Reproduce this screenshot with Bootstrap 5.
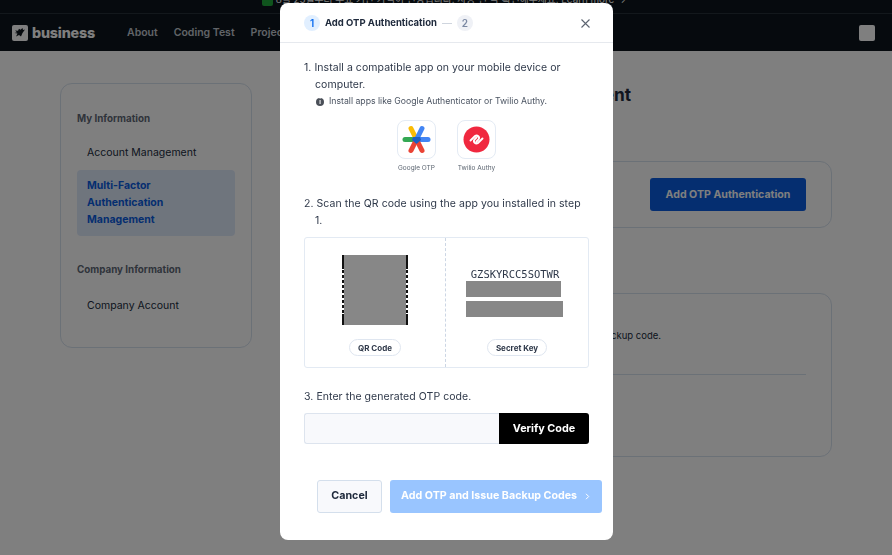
<!DOCTYPE html>
<html lang="en">
<head>
  <meta charset="UTF-8">
  <meta name="viewport" content="width=device-width, initial-scale=1.0">
  <title>Add OTP Authentication</title>
  <link href="https://cdn.jsdelivr.net/npm/bootstrap@5.3.3/dist/css/bootstrap.min.css" rel="stylesheet">
  <style>
    html, body { height: 100%; overflow: hidden; }
    body { font-family: Inter, "Noto Sans CJK KR", sans-serif; color: #202b3d; background: #fff; }

    .top-notice { height: 14px; background: #0c151c; color: #fff; border-bottom: 1px solid #263038; font-size: 9.800px; line-height: 13px; overflow: hidden; }
    .top-notice-inner { margin-top: -7px; margin-left: 262px; white-space: nowrap; }
    .notice-check { display: inline-block; width: 11px; height: 11px; background: #1fa83a; border-radius: 2px; vertical-align: middle; }
    .site-nav { height: 37px; background: #0c151c; padding: 0 17px 0 12px; }
    .site-logo { width: 16px; height: 16px; background: #fff; border-radius: 2px; }
    .site-name { font-size: 14.300px; font-weight: 800; color: #fff; margin-left: 4px; width: 95px; letter-spacing: -.2px; }
    .site-link { font-size: 10.500px; font-weight: 600; color: #c2c8d0; margin-right: 16px; }
    .user-box { width: 16px; height: 16px; background: #fff; border-radius: 2px; }

    .page-wrap { padding: 32px 60px 0; gap: 30px; }
    .side-box { width: 192px; height: 265px; border: 1px solid #d7e2ee; border-radius: 12px; padding: 27px 16px 0; flex: none; }
    .side-title { font-size: 9.800px; font-weight: 700; color: #5f6977; margin-bottom: 12px; line-height: 16px; }
    .side-title-low { margin-bottom: 14px; }
    .side-item { font-size: 10.500px; padding: 5px 10px; line-height: 17px; margin-bottom: 4px; }
    .side-item.is-active { background: #dfeafb; color: #0a5ce0; font-weight: 700; border-radius: 4px; padding: 7px 10px 8px; margin-bottom: 26px; }
    .main-area { flex: 1; }
    .main-title { font-size: 17.250px; font-weight: 700; height: 78px; line-height: 24px; white-space: nowrap; }
    .main-box { border: 1px solid #d7e2ee; border-radius: 12px; }
    .main-box-otp { height: 67px; margin-bottom: 65px; padding: 16px 25px 0 0; }
    .main-box-backup { height: 164px; padding: 35px 25px 0 0; font-size: 9.500px; line-height: 14px; }
    .backup-note { text-align: right; padding-right: 145px; }
    .btn-otp { width: 156px; height: 33px; background: #0a5ce0; color: #fff; font-size: 10.600px; font-weight: 700; border: 0; border-radius: 3px; }
    .backup-rule { margin-top: 31px; border-top: 1px solid #d7e2ee; }

    .otp-dialog { width: 333px; max-width: none; margin: 3px 0 0 280px; }
    .otp-dialog .modal-content { border: 0; border-radius: 8px; height: 537px; }
    .otp-dialog .modal-header { height: 40px; padding: 1px 23px 0 24px; border-bottom: 1px solid #e6e9ee; }
    .step-num { width: 16px; height: 16px; border-radius: 50%; font-size: 10px; font-weight: 600; }
    .step-on { background: #e1efff; color: #0a6cf0; }
    .step-off { background: #eff1f6; color: #7a88a3; }
    .step-label { font-size: 9.500px; font-weight: 700; margin: 0 5px; }
    .step-dash { width: 10px; height: 1px; background: #cfd5de; margin-right: 5px; }
    .close-x { border: 0; background: none; padding: 0; line-height: 0; }

    .otp-body { padding: 16px 24px 0; font-size: 10.500px; line-height: 17px; color: #2e3849; }
    .step-text { padding-left: 11px; text-indent: -11px; margin: 0; letter-spacing: .06px; }
    .step-hint { font-size: 8.700px; color: #4a5361; padding-left: 12px; line-height: 16px; }
    .hint-dot { display: inline-flex; align-items: center; justify-content: center; width: 8px; height: 8px; border-radius: 50%; background: #4a4f58; color: #fff; font-size: 6px; font-weight: 700; font-style: normal; margin-right: 5px; line-height: 1; }
    .app-row { gap: 20px; margin-top: 11px; height: 70px; }
    .app-col { width: 40px; }
    .app-tile { width: 39px; height: 39px; border: 1px solid #e4ebf4; border-radius: 8px; }
    .app-name { font-size: 6.500px; line-height: 10px; color: #5b6470; margin-top: 4px; white-space: nowrap; }
    .step-two { margin-top: 5px !important; }
    .qr-panel { height: 131px; border: 1px solid #e3eaf3; border-radius: 3px; margin-top: 8px; }
    .qr-half { width: 141px; flex: none; border-right: 1px dashed #ccd6e4; height: 100%; }
    .key-half { flex: 1; }
    .qr-stage { height: 101px; padding-top: 3px; }
    .qr-img { width: 66px; height: 70px; background:
      linear-gradient(#878787, #878787) center / 62px 100% no-repeat,
      linear-gradient(#111, #111) 0 3px / 100% 11px no-repeat,
      linear-gradient(#111, #111) 0 100% / 100% 11px no-repeat,
      repeating-linear-gradient(#111 0 3px, #fff 3px 5px); }
    .key-group { width: 97px; margin: 5px 6px 0 0; }
    .secret-code { font-family: "DejaVu Sans Mono", monospace; font-size: 10.500px; line-height: 12px; color: #2e3849; margin-bottom: 1px; padding-left: 2px; text-align: center; white-space: nowrap; }
    .mask-a { width: 95px; height: 16px; background: #878787; margin-bottom: 4px; }
    .mask-b { width: 97px; height: 16px; background: #878787; }
    .tag-pill { font-size: 8px; font-weight: 700; line-height: 14px; border: 1px solid #dfe6f0; border-radius: 9px; padding: 1px 8px; height: 17px; color: #2e3849; background: #fff; }
    .step-three { margin-top: 20px !important; }
    .verify-row { margin-top: 8px; height: 31px; }
    .verify-row .form-control { height: 31px; background: #f8f9fc; border: 1px solid #dde4ee; border-right: 0; border-radius: 3px 0 0 3px; }
    .btn-verify { width: 90px; flex: none; background: #000; color: #fff; font-size: 10.800px; font-weight: 700; border: 0; border-radius: 0 3px 3px 0; padding: 0; }
    .otp-foot { padding: 36px 11px 0 37px; gap: 8px; }
    .btn-cancel { width: 65px; height: 33px; padding: 0; background: #f8f9fc; border: 1px solid #d4dfec; border-radius: 3px; color: #202b3d; font-size: 10.700px; font-weight: 700; }
    .btn-issue { width: 212px; height: 33px; padding: 0 12px 0 11px; background: #99c5ff; color: #fff; border: 0; border-radius: 3px; font-size: 10.700px; font-weight: 700; }
  </style>
</head>
<body>
  <div class="top-notice">
    <div class="top-notice-inner"><span class="notice-check"></span> 8월 25일부터 무료 기간 가격이 인상됩니다. 사용 전 꼭 확인해주세요. Learn more →</div>
  </div>
  <nav class="site-nav d-flex align-items-center">
    <span class="site-logo d-flex align-items-center justify-content-center">
      <svg width="12" height="11" viewBox="0 0 12 11"><path d="M1 3.500l3 .3 1-2 1.500 1 2-1.800.5 2L11 2.500 8.500 6 7 9.500 5 8 2 9.500l1.500-3L.500 6l2.500-.7z" fill="#0c151c"/></svg>
    </span>
    <span class="site-name">business</span>
    <span class="site-link">About</span>
    <span class="site-link">Coding Test</span>
    <span class="site-link">Projects</span>
    <span class="user-box ms-auto"></span>
  </nav>

  <div class="page-wrap d-flex">
    <aside class="side-box">
      <div class="side-title">My Information</div>
      <div class="side-item">Account Management</div>
      <div class="side-item is-active">Multi-Factor Authentication Management</div>
      <div class="side-title side-title-low">Company Information</div>
      <div class="side-item">Company Account</div>
    </aside>
    <main class="main-area">
      <div class="main-title">Multi-Factor Authentication Management</div>
      <div class="main-box main-box-otp d-flex justify-content-end">
        <button class="btn-otp" type="button">Add OTP Authentication</button>
      </div>
      <div class="main-box main-box-backup">
        <div class="backup-note">Verify your identity with a backup code.</div>
        <div class="backup-rule"></div>
      </div>
    </main>
  </div>

  <div class="modal-backdrop fade show"></div>
  <div class="modal d-block">
    <div class="modal-dialog otp-dialog">
      <div class="modal-content">
        <div class="modal-header">
          <span class="step-num step-on d-flex align-items-center justify-content-center">1</span>
          <span class="step-label">Add OTP Authentication</span>
          <span class="step-dash"></span>
          <span class="step-num step-off d-flex align-items-center justify-content-center">2</span>
          <button class="close-x ms-auto" type="button" aria-label="Close">
            <svg width="9" height="9" viewBox="0 0 9 9"><path d="M.5.5l8 8M8.500.5l-8 8" stroke="#5c6470" stroke-width="1.100" fill="none"/></svg>
          </button>
        </div>
        <div class="otp-body">
          <p class="step-text">1. Install a compatible app on your mobile device or computer.</p>
          <div class="step-hint"><i class="hint-dot">i</i>Install apps like Google Authenticator or Twilio Authy.</div>
          <div class="app-row d-flex justify-content-center">
            <div class="app-col d-flex flex-column align-items-center">
              <div class="app-tile d-flex align-items-center justify-content-center">
                <svg width="29" height="29" viewBox="0 0 29 29" stroke-width="5" stroke-linecap="round" fill="none">
                  <path d="M3 14.500h11" stroke="#34a853"/>
                  <path d="M14.500 14.500h11.500" stroke="#4285f4"/>
                  <path d="M9 3.500l5.500 11" stroke="#fbbc04"/>
                  <path d="M20 3.500l-5.500 11" stroke="#4285f4"/>
                  <path d="M14.500 14.500l-5.500 11" stroke="#ea4335"/>
                  <path d="M14.500 14.500l5.500 11" stroke="#ea4335"/>
                  <path d="M11 12h7l1 3-4.500 4-4.500-4z" fill="#1a5fc4" stroke="none"/>
                </svg>
              </div>
              <div class="app-name">Google OTP</div>
            </div>
            <div class="app-col d-flex flex-column align-items-center">
              <div class="app-tile d-flex align-items-center justify-content-center">
                <svg width="29" height="29" viewBox="0 0 29 29" fill="none">
                  <circle cx="14.500" cy="14.500" r="13" fill="#f0283f"/>
                  <path d="M8.500 15.500L13 11a2.500 2.500 0 0 1 3.500 3.500l-2 2M20.500 13.500L16 18a2.500 2.500 0 0 1-3.500-3.500l2-2" stroke="#fff" stroke-width="1.900" stroke-linecap="round"/>
                </svg>
              </div>
              <div class="app-name">Twilio Authy</div>
            </div>
          </div>

          <p class="step-text step-two">2. Scan the QR code using the app you installed in step 1.</p>
          <div class="qr-panel d-flex">
            <div class="qr-half d-flex flex-column align-items-center">
              <div class="qr-stage d-flex align-items-center justify-content-center"><div class="qr-img"></div></div>
              <span class="tag-pill">QR Code</span>
            </div>
            <div class="key-half d-flex flex-column align-items-center">
              <div class="qr-stage d-flex align-items-center justify-content-center">
                <div class="key-group">
                  <div class="secret-code">GZSKYRCC5SOTWR</div>
                  <div class="mask-a"></div>
                  <div class="mask-b"></div>
                </div>
              </div>
              <span class="tag-pill">Secret Key</span>
            </div>
          </div>

          <p class="step-text step-three">3. Enter the generated OTP code.</p>
          <div class="verify-row d-flex">
            <input class="form-control" type="text" aria-label="OTP code">
            <button class="btn-verify" type="button">Verify Code</button>
          </div>
        </div>
        <div class="otp-foot d-flex">
          <button class="btn-cancel" type="button">Cancel</button>
          <button class="btn-issue d-flex align-items-center justify-content-between" type="button" disabled>
            <span>Add OTP and Issue Backup Codes</span>
            <svg width="5" height="7" viewBox="0 0 5 7"><path d="M1 .8l2.700 2.700L1 6.200" stroke="#fff" stroke-width="1" fill="none"/></svg>
          </button>
        </div>
      </div>
    </div>
  </div>
</body>
</html>
